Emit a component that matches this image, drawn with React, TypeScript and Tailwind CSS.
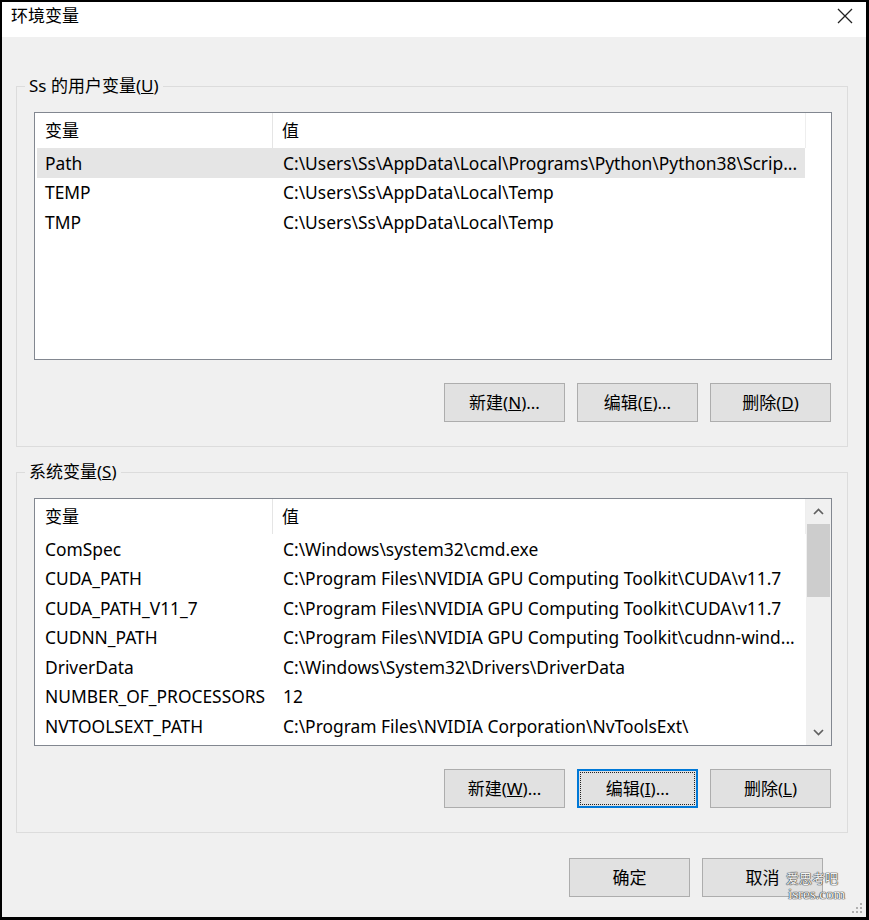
import React from "react";

type Row = [string, string];

const userRows: Row[] = [
  ["Path", "C:\\Users\\Ss\\AppData\\Local\\Programs\\Python\\Python38\\Scrip..."],
  ["TEMP", "C:\\Users\\Ss\\AppData\\Local\\Temp"],
  ["TMP", "C:\\Users\\Ss\\AppData\\Local\\Temp"],
];

const sysRows: Row[] = [
  ["ComSpec", "C:\\Windows\\system32\\cmd.exe"],
  ["CUDA_PATH", "C:\\Program Files\\NVIDIA GPU Computing Toolkit\\CUDA\\v11.7"],
  ["CUDA_PATH_V11_7", "C:\\Program Files\\NVIDIA GPU Computing Toolkit\\CUDA\\v11.7"],
  ["CUDNN_PATH", "C:\\Program Files\\NVIDIA GPU Computing Toolkit\\cudnn-wind..."],
  ["DriverData", "C:\\Windows\\System32\\Drivers\\DriverData"],
  ["NUMBER_OF_PROCESSORS", "12"],
  ["NVTOOLSEXT_PATH", "C:\\Program Files\\NVIDIA Corporation\\NvToolsExt\\"],
];

function Chevron({ up }: { up: boolean }) {
  return (
    <svg width="11" height="7" viewBox="0 0 11 7">
      <path
        d={up ? "M1 6 L5.5 1.5 L10 6" : "M1 1 L5.5 5.5 L10 1"}
        fill="none"
        stroke="#606060"
        strokeWidth="1.7"
      />
    </svg>
  );
}

function ListView({ rows, selected, scroll }: { rows: Row[]; selected: number; scroll: boolean }) {
  return (
    <div className="h-[248px] border border-[#828790] bg-white flex overflow-hidden">
      <div className="w-[771px] flex flex-col shrink-0">
        <div className="h-[35px] flex shrink-0 text-[17px]">
          <div className="w-[238px] border-r border-[#e5e5e5] pl-[10px] flex items-center">变量</div>
          <div className="flex-1 pl-[9px] flex items-center border-r border-[#eeeeee]">值</div>
        </div>
        {rows.map((r, i) => (
          <div
            key={r[0] + i}
            className={
              i === selected
                ? "h-[29.5px] shrink-0 flex items-center bg-[#e5e5e5] ml-[2px] mr-[1px] text-[17.4px]"
                : "h-[29.5px] shrink-0 flex items-center ml-[2px] mr-[1px] text-[17.4px]"
            }
          >
            <div className="w-[236px] pl-[8px] whitespace-nowrap overflow-hidden">{r[0]}</div>
            <div className="flex-1 pl-[10px] whitespace-nowrap overflow-hidden">{r[1]}</div>
          </div>
        ))}
      </div>
      {scroll ? (
        <div className="flex-1 bg-[#f0f0f0] flex flex-col">
          <div className="h-[25px] flex items-center justify-center">
            <Chevron up={true} />
          </div>
          <div className="flex-1">
            <div className="h-[73px] mx-[1px] bg-[#cdcdcd]" />
          </div>
          <div className="h-[25px] flex items-center justify-center">
            <Chevron up={false} />
          </div>
        </div>
      ) : (
        <div className="flex-1 bg-white" />
      )}
    </div>
  );
}

function Btn({ children, focused }: { children: React.ReactNode; focused?: boolean }) {
  return (
    <div
      className={
        focused
          ? "w-[121px] h-[39px] bg-[#e1e1e1] border-2 border-[#0078d7] outline-1 outline-dotted outline-[#222] outline-offset-[-4px] flex items-center justify-center"
          : "w-[121px] h-[39px] bg-[#e1e1e1] border border-[#adadad] flex items-center justify-center"
      }
    >
      {children}
    </div>
  );
}

function Group({ label, children }: { label: React.ReactNode; children: React.ReactNode }) {
  return (
    <fieldset className="border border-[#dcdcdc] ml-[14px] mr-[18px] p-0 m-0">
      <legend className="ml-[8px] px-[4px] leading-[24px] text-[17px]">{label}</legend>
      <div className="pt-[14px] pl-[17px] pr-[15px] pb-[24px]">{children}</div>
    </fieldset>
  );
}

export default function App() {
  return (
    <div
      className="w-[869px] h-[920px] bg-black pt-[2px] pl-[2px] pr-[3px] pb-[3px] text-[#000] text-[16px]"
      style={{ fontFamily: '"Noto Sans", "Noto Sans CJK SC", sans-serif' }}
    >
      <div className="relative h-full bg-[#f0f0f0] flex flex-col">
        <div className="h-[35px] bg-white shrink-0 flex justify-between">
          <div className="pl-[9px] pt-[2px] leading-[24px] text-[17px]">环境变量</div>
          <div className="pr-[12px] pt-[5px]">
            <svg width="18" height="18" viewBox="0 0 18 18">
              <path d="M2 2 L16 16 M16 2 L2 16" stroke="#222" strokeWidth="1.3" fill="none" />
            </svg>
          </div>
        </div>

        <div className="mt-[37px]">
          <Group
            label={
              <span>
                Ss 的用户变量(<span className="underline">U</span>)
              </span>
            }
          >
            <ListView rows={userRows} selected={0} scroll={false} />
            <div className="mt-[23px] flex justify-end gap-[12px] pr-[1px] text-[17px]">
              <Btn>
                新建(<span className="underline">N</span>)...
              </Btn>
              <Btn>
                编辑(<span className="underline">E</span>)...
              </Btn>
              <Btn>
                删除(<span className="underline">D</span>)
              </Btn>
            </div>
          </Group>
        </div>

        <div className="mt-[13px]">
          <Group
            label={
              <span>
                系统变量(<span className="underline">S</span>)
              </span>
            }
          >
            <ListView rows={sysRows} selected={-1} scroll={true} />
            <div className="mt-[23px] flex justify-end gap-[12px] pr-[1px] text-[17px]">
              <Btn>
                新建(<span className="underline">W</span>)...
              </Btn>
              <Btn focused={true}>
                编辑(<span className="underline">I</span>)...
              </Btn>
              <Btn>
                删除(<span className="underline">L</span>)
              </Btn>
            </div>
          </Group>
        </div>

        <div className="mt-[25px] flex justify-end gap-[12px] mr-[43px] text-[17px]">
          <Btn>确定</Btn>
          <Btn>取消</Btn>
        </div>

        <div className="absolute left-[784px] top-[869px] flex flex-col items-start leading-none pointer-events-none">
          <span
            className="text-[13px] leading-[14px] text-[#f4f4f4] [text-shadow:0_0_1px_#333,0_0_1px_#333,0_0_1px_#333]"
            style={{ fontFamily: '"Noto Sans CJK SC", sans-serif' }}
          >
            爱思考吧
          </span>
          <span
            className="mt-[3px] ml-[2px] text-[15px] leading-[12px] text-[#f4f4f4] [text-shadow:0_0_1px_#333,0_0_1px_#333,0_0_1px_#333]"
            style={{ fontFamily: '"Liberation Serif", serif' }}
          >
            isres.com
          </span>
        </div>

        <div className="absolute right-[3px] bottom-[3px]">
          <svg width="12" height="12" viewBox="0 0 12 12">
            <rect x="9" y="1" width="2" height="2" fill="#b0b0b0" />
            <rect x="5" y="5" width="2" height="2" fill="#b0b0b0" />
            <rect x="9" y="5" width="2" height="2" fill="#b0b0b0" />
            <rect x="1" y="9" width="2" height="2" fill="#b0b0b0" />
            <rect x="5" y="9" width="2" height="2" fill="#b0b0b0" />
            <rect x="9" y="9" width="2" height="2" fill="#b0b0b0" />
          </svg>
        </div>
      </div>
    </div>
  );
}
